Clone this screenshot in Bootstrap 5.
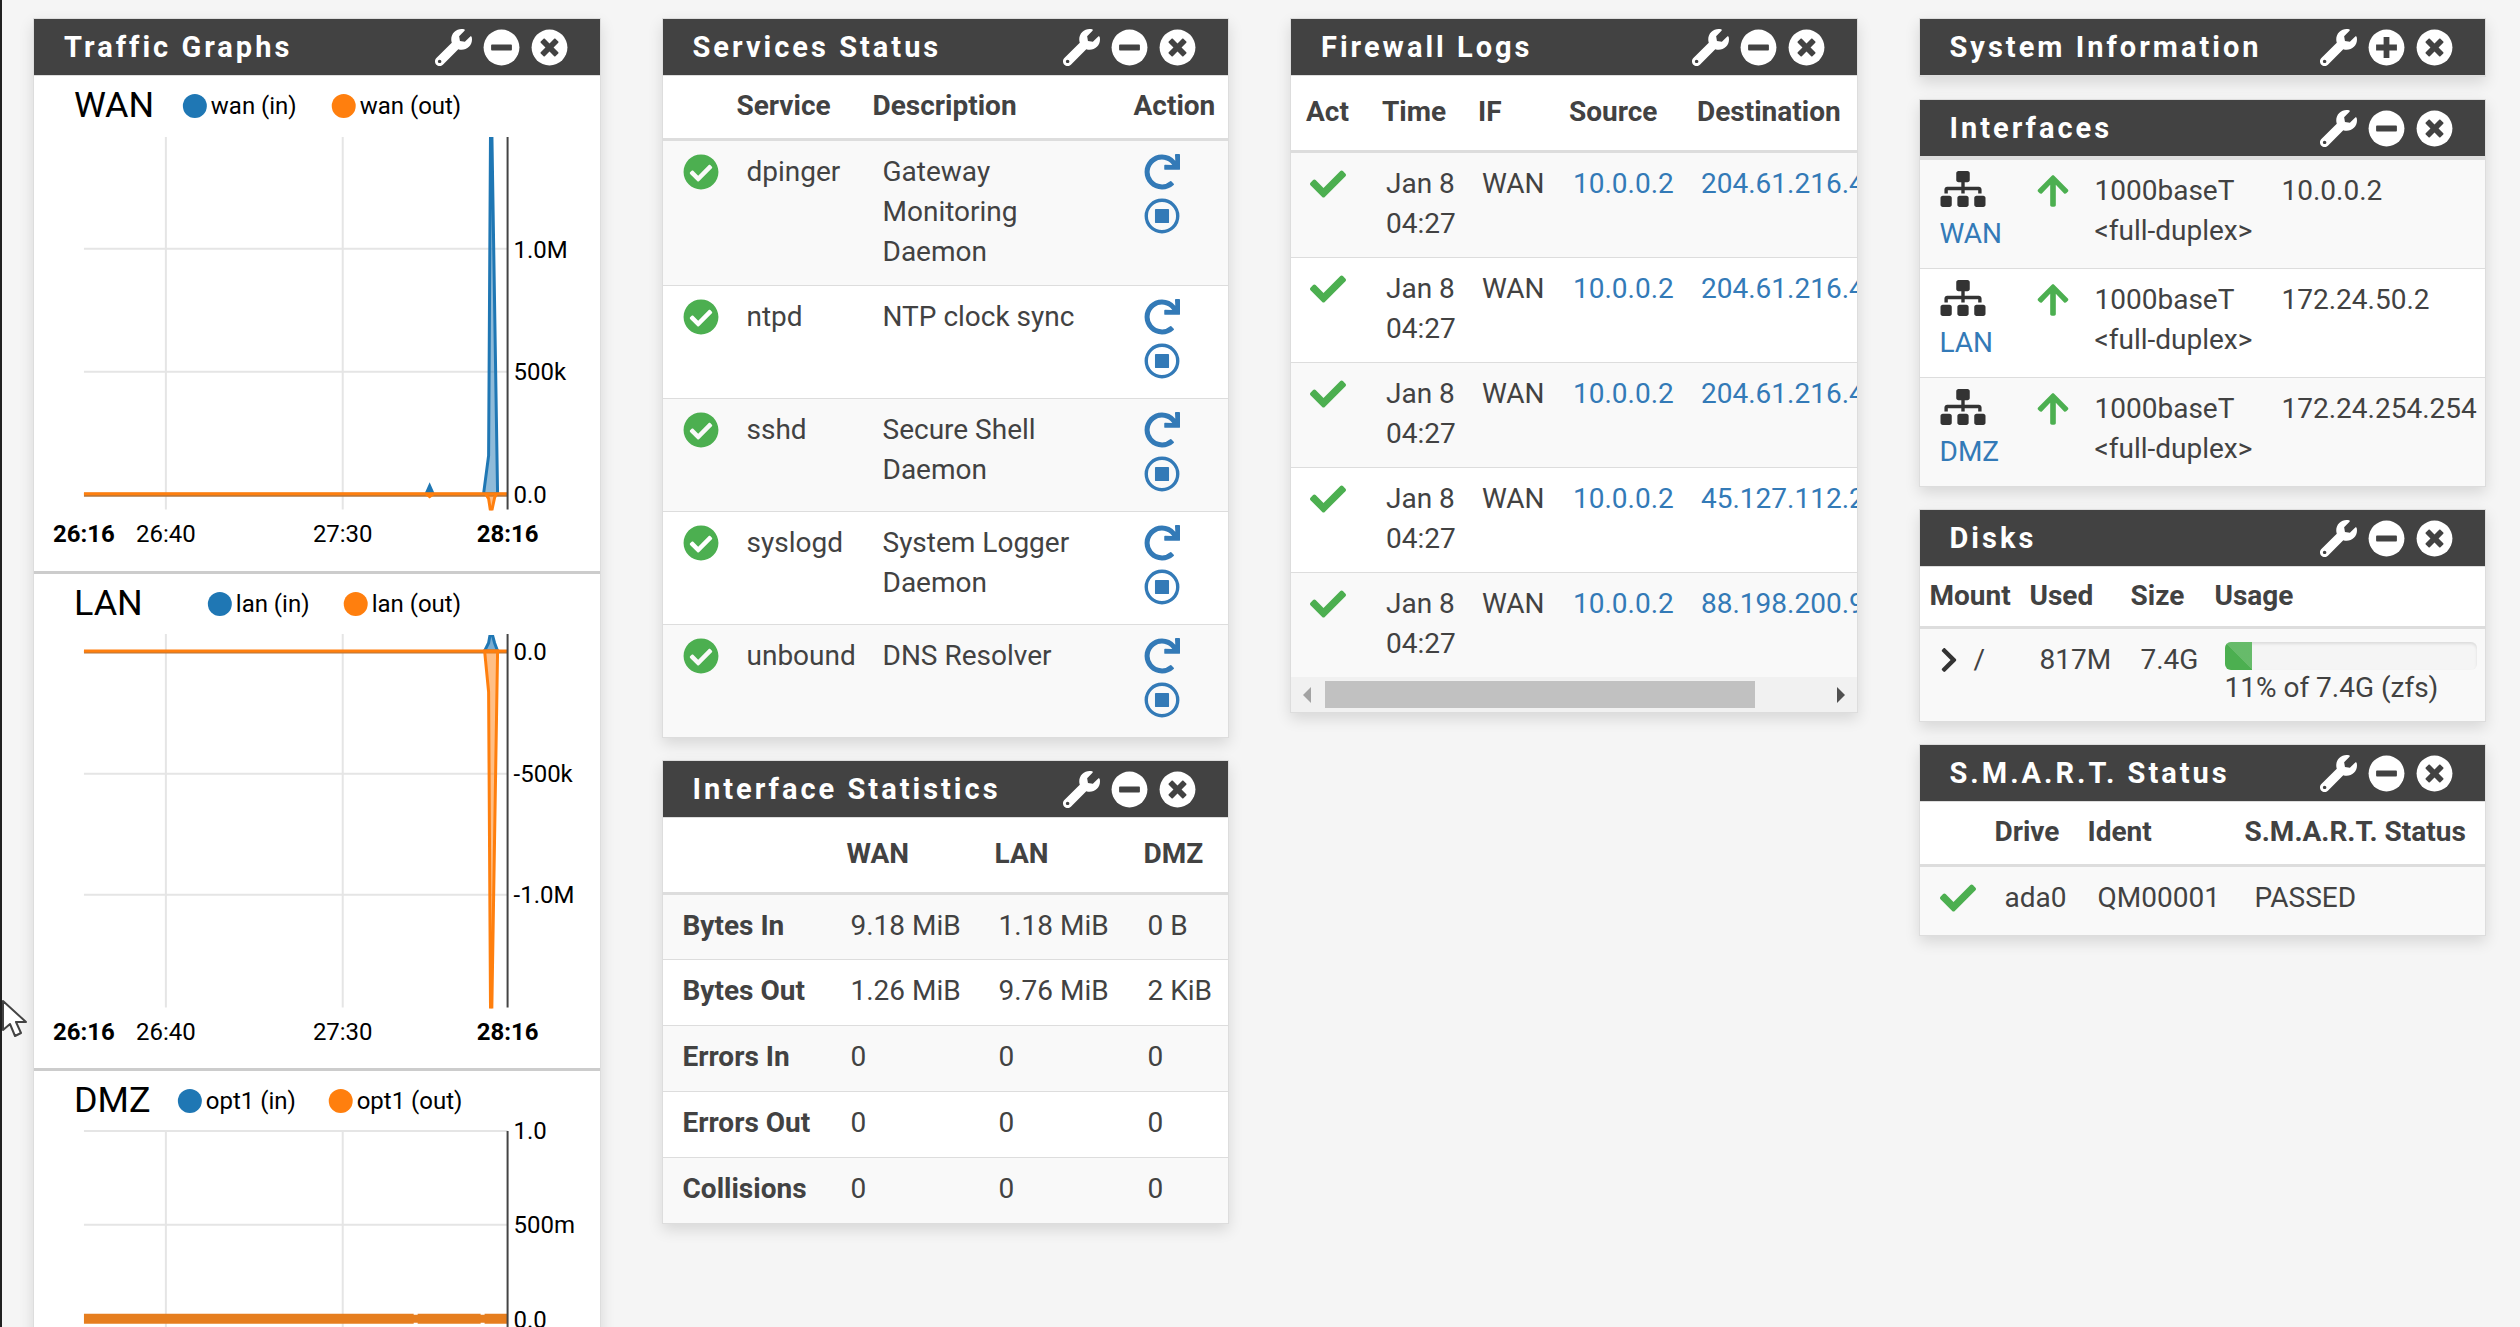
<!DOCTYPE html>
<html lang="en">
<head>
<meta charset="utf-8">
<meta name="viewport" content="width=device-width, initial-scale=1">
<title>Status / Dashboard</title>
<link href="https://cdn.jsdelivr.net/npm/bootstrap@5.3.0/dist/css/bootstrap.min.css" rel="stylesheet">
<style>
  body { font-family: Roboto, sans-serif; font-size: 28px; line-height: 40px; color: #424242; background: #f5f5f5; }
  a { color: #337ab7; text-decoration: none; }
  main { border-left: 2px solid #212121; padding: 18px 34px 0 31px; height: 100vh; overflow: hidden; }
  .board { --bs-gutter-x: 61px; }
  .widget { border: 1px solid #ddd; background: #fff; margin-bottom: 22px; box-shadow: 0 6px 14px rgba(0,0,0,.12); }
  .widget-head { height: 57px; padding: 0 32px 0 30px; background: #424242; border-bottom: 1px solid #ddd; }
  .widget-head h2 { font-size: 29px; line-height: 40px; font-weight: 700; letter-spacing: 3px; color: #fff; }
  .tool { display: flex; padding: 0; border: 0; background: none; color: #fff; }
  .tools { gap: 11px; }
  .tool svg { width: 37px; height: 37px; }
  .glyph { display: block; width: 36px; height: 36px; fill: currentColor; }
  .ok { color: #4caf50; }
  .up { width: 32px; }
  .net { width: 46px; color: #333; margin-bottom: 7px; }
  .chev { width: 18px; height: 28px; color: #333; }
  .icon-line { height: 40px; display: flex; align-items: center; }
  .act-links { display: flex; flex-direction: column; gap: 8px; padding-top: 2px; }

  .grid-tbl { table-layout: fixed; border-collapse: separate; border-spacing: 0; margin: 0; --bs-table-bg: transparent; --bs-table-color: #424242; --bs-table-striped-bg: #f9f9f9; --bs-table-striped-color: #424242; }
  .grid-tbl thead th { padding: 10px 0 12px 10px; border: 0; font-weight: 700; color: #424242; white-space: nowrap; }
  .grid-tbl tbody tr > * { padding: 11px 8px 13px 20px; border: 0; border-top: 1px solid #ddd; }
  .grid-tbl tbody tr:first-child > * { border-top: 3px solid #ddd; }
  .tall-head thead th { padding: 16px 0 18px 12px; }
  .tall-head tbody tr > * { padding-left: 16px; padding-right: 0; }
  .tall-head tbody tr > th { font-weight: 700; color: #424242; height: 66px; padding-left: 20px; }
  .log-tbl { width: 650px; }
  .log-tbl thead th { padding-left: 15px; }
  .log-tbl tbody tr > * { padding-left: 19px; }
  .log-tbl tbody td { white-space: nowrap; }
  .svc-tbl tbody td { height: 113px; }
  .if-tbl tbody td { height: 109px; white-space: nowrap; padding-right: 0; }
  .if-tbl tbody tr:first-child > td { height: 111px; }
  .disk-tbl thead th { padding: 9px 0 10px 10px; }
  .disk-tbl tbody td { height: 95px; }
  .smart-tbl tbody td { height: 71px; padding-right: 0; }
  .usage-track { height: 28px; border-radius: 6px; background: #f5f5f5; box-shadow: inset 0 2px 3px rgba(0,0,0,.1); margin-top: 2px; }
  .usage-track .progress-bar { background-color: #4caf50; background-size: 64px 64px; }
  .usage-text { line-height: 36px; white-space: nowrap; }

  .sbar { height: 35px; background: #f1f1f1; display: flex; align-items: center; padding: 0 12px; gap: 14px; }
  .sbar button { padding: 0; border: 0; background: none; display: flex; }
  .sbar svg { width: 8px; height: 16px; }
  .sbar-track { flex: 1; height: 27px; }
  .sbar-thumb { height: 27px; width: 430px; background: #c1c1c1; }

  .chart { border-bottom: 3px solid #ccc; }
  .chart svg { display: block; width: 100%; }
  .chart text { font-family: Roboto, sans-serif; font-size: 24px; fill: #000; }
  .chart .series-name { font-size: 36px; }
  .chart .mid { text-anchor: middle; }
  .chart .edge { text-anchor: middle; font-weight: 700; }
  .gridline { stroke: #e5e5e5; stroke-width: 2; fill: none; }
  .axis { stroke: #444; stroke-width: 2; }
  .pointer { position: absolute; left: 2px; top: 999px; width: 26px; height: 40px; }
</style>
</head>
<body>
<svg class="d-none" aria-hidden="true">
  <symbol id="i-wrench" viewBox="0 0 512 512"><path d="M507.730 109.100c-2.240-9.030-13.540-12.090-20.120-5.510l-74.360 74.360-67.880-11.310-11.310-67.880 74.360-74.360c6.620-6.620 3.430-17.900-5.660-20.160-47.380-11.740-99.550.91-136.580 37.930-39.640 39.640-50.550 97.100-34.050 147.200L18.740 402.760c-24.990 24.990-24.990 65.510 0 90.500 24.990 24.990 65.510 24.990 90.500 0l213.210-213.210c50.120 16.710 107.470 5.680 147.370-34.220 37.070-37.070 49.700-89.320 37.910-136.730zM64 472c-13.250 0-24-10.750-24-24 0-13.260 10.750-24 24-24s24 10.740 24 24c0 13.250-10.750 24-24 24z" fill="currentColor"/></symbol>
  <symbol id="i-minus" viewBox="0 0 512 512"><circle cx="256" cy="256" r="248" fill="currentColor"/><rect x="112" y="216" width="288" height="80" rx="12" fill="#424242"/></symbol>
  <symbol id="i-plus" viewBox="0 0 512 512"><circle cx="256" cy="256" r="248" fill="currentColor"/><path d="M112 216h104V112h80v104h104v80H296v104h-80V296H112z" fill="#424242"/></symbol>
  <symbol id="i-times" viewBox="0 0 512 512"><circle cx="256" cy="256" r="248" fill="currentColor"/><path fill="#424242" d="M377.6 338c4.700-4.700 4.700-12.300 0-17L312 256l65.600-65c4.700-4.700 4.700-12.300 0-17L338 134.400c-4.700-4.700-12.300-4.700-17 0L256 200l-65-65.600c-4.700-4.700-12.300-4.700-17 0L134.400 174c-4.700 4.700-4.700 12.300 0 17l65.600 65-65.600 65c-4.700 4.700-4.700 12.300 0 17L174 377.600c4.700 4.700 12.300 4.700 17 0L256 312l65 65.600c4.700 4.700 12.300 4.700 17 0z"/></symbol>
  <symbol id="i-okc" viewBox="0 0 512 512"><path d="M504 256c0 136.967-111.033 248-248 248S8 392.967 8 256 119.033 8 256 8s248 111.033 248 248zM227.314 387.314l184-184c6.248-6.248 6.248-16.379 0-22.627l-22.627-22.627c-6.248-6.249-16.379-6.249-22.628 0L216 308.118l-70.059-70.059c-6.248-6.248-16.379-6.248-22.628 0l-22.627 22.627c-6.248 6.248-6.248 16.379 0 22.627l104 104c6.249 6.249 16.379 6.249 22.628.001z"/></symbol>
  <symbol id="i-check" viewBox="0 0 512 512"><path d="M173.898 439.404l-166.400-166.400c-9.997-9.997-9.997-26.206 0-36.204l36.203-36.204c9.997-9.998 26.207-9.998 36.204 0L192 312.690 432.095 72.596c9.997-9.997 26.207-9.997 36.204 0l36.203 36.204c9.997 9.997 9.997 26.206 0 36.204l-294.400 294.401c-9.998 9.997-26.207 9.997-36.204-.001z"/></symbol>
  <symbol id="i-redo" viewBox="0 0 512 512"><path d="M500.33 0h-47.41a12 12 0 0 0-12 12.570l4 82.760A247.420 247.420 0 0 0 256 8C119.340 8 7.900 119.530 8 256.190 8.100 393.070 119.100 504 256 504a247.100 247.100 0 0 0 166.180-63.910 12 12 0 0 0 .48-17.430l-34-34a12 12 0 0 0-16.380-.55A176 176 0 1 1 402.100 157.800l-101.530-4.870a12 12 0 0 0-12.570 12v47.410a12 12 0 0 0 12 12h200.330a12 12 0 0 0 12-12V12a12 12 0 0 0-12-12z"/></symbol>
  <symbol id="i-stop" viewBox="0 0 512 512"><circle cx="256" cy="256" r="224" fill="none" stroke="currentColor" stroke-width="48"/><rect x="156" y="156" width="200" height="200" rx="12"/></symbol>
  <symbol id="i-net" viewBox="0 0 640 512"><path d="M128 352H32c-17.670 0-32 14.330-32 32v96c0 17.670 14.330 32 32 32h96c17.670 0 32-14.330 32-32v-96c0-17.670-14.330-32-32-32zm-24-80h192v48h48v-48h192v48h48v-57.590c0-21.170-17.230-38.410-38.410-38.410H344v-64h40c17.670 0 32-14.330 32-32V32c0-17.670-14.330-32-32-32H256c-17.670 0-32 14.330-32 32v96c0 17.670 14.330 32 32 32h40v64H94.410C73.230 224 56 241.230 56 262.410V320h48v-48zm264 80h-96c-17.670 0-32 14.330-32 32v96c0 17.670 14.330 32 32 32h96c17.670 0 32-14.330 32-32v-96c0-17.670-14.330-32-32-32zm240 0h-96c-17.670 0-32 14.330-32 32v96c0 17.670 14.330 32 32 32h96c17.670 0 32-14.330 32-32v-96c0-17.670-14.330-32-32-32z"/></symbol>
  <symbol id="i-up" viewBox="0 0 448 512"><path d="M34.900 289.500l-22.200-22.200c-9.400-9.400-9.400-24.600 0-33.900L207 39c9.400-9.400 24.600-9.400 33.900 0l194.300 194.300c9.400 9.400 9.400 24.600 0 33.900L413 289.400c-9.500 9.500-25 9.300-34.300-.4L264 168.600V456c0 13.300-10.700 24-24 24h-32c-13.300 0-24-10.700-24-24V168.600L69.200 289.100c-9.300 9.800-24.800 10-34.300.4z"/></symbol>
  <symbol id="i-chev" viewBox="0 0 320 512"><path d="M285.476 272.971L91.132 467.314c-9.373 9.373-24.569 9.373-33.941 0l-22.667-22.667c-9.357-9.357-9.375-24.522-.04-33.901L188.505 256 34.484 101.255c-9.335-9.379-9.317-24.544.04-33.901l22.667-22.667c9.373-9.373 24.569-9.373 33.941 0L285.475 239.030c9.373 9.372 9.373 24.568.001 33.941z"/></symbol>
</svg>

<main>
  <div class="row row-cols-4 board">

    <div class="col">
      <section class="widget">
        <header class="widget-head d-flex align-items-center justify-content-between">
          <h2 class="m-0">Traffic Graphs</h2>
          <div class="tools d-flex">
            <button class="tool" aria-label="Settings"><svg><use href="#i-wrench"/></svg></button>
            <button class="tool" aria-label="Collapse"><svg><use href="#i-minus"/></svg></button>
            <button class="tool" aria-label="Close"><svg><use href="#i-times"/></svg></button>
          </div>
        </header>

        <div class="chart">
          <svg viewBox="0 0 566 495">
            <clipPath id="plot"><rect x="48" y="61" width="430" height="374"/></clipPath>
            <text class="series-name" x="40" y="41">WAN</text>
            <circle cx="161" cy="30" r="12" fill="#1f77b4"/><text x="177" y="38">wan (in)</text>
            <circle cx="310" cy="30" r="12" fill="#ff7f0e"/><text x="326" y="38">wan (out)</text>
            <path class="gridline" d="M132 61V434M309 61V434M50 173H474M50 296H474"/>
            <g clip-path="url(#plot)">
              <path d="M450 418L455 380L457 40H458L464 418Z" fill="#1f77b4" fill-opacity=".5" stroke="#1f77b4" stroke-width="3"/>
              <path d="M392 418L396 409L400 418Z" fill="#1f77b4" stroke="#1f77b4" stroke-width="2"/>
              <path d="M50 419H474" stroke="#b5763c" stroke-width="4"/>
              <path d="M50 418H474" stroke="#ff7f0e" stroke-width="3"/>
              <path d="M392 418L396 421L400 418M452 418L455 423L457 436H458L461 422L463 418" fill="#ff7f0e" fill-opacity=".5" stroke="#ff7f0e" stroke-width="3"/>
            </g>
            <path class="axis" d="M474 61V434"/>
            <text x="480" y="182">1.0M</text><text x="480" y="304">500k</text><text x="480" y="427">0.0</text>
            <text class="edge" x="50" y="466">26:16</text><text class="mid" x="132" y="466">26:40</text><text class="mid" x="309" y="466">27:30</text><text class="edge" x="474" y="466">28:16</text>
          </svg>
        </div>

        <div class="chart">
          <svg viewBox="0 0 566 495">
            <text class="series-name" x="40" y="41">LAN</text>
            <circle cx="186" cy="30" r="12" fill="#1f77b4"/><text x="202" y="38">lan (in)</text>
            <circle cx="322" cy="30" r="12" fill="#ff7f0e"/><text x="338" y="38">lan (out)</text>
            <path class="gridline" d="M132 60V434M309 60V434M50 200H474M50 321H474"/>
            <g clip-path="url(#plot)">
              <path d="M451 77L455 69L457 58H458L461 69L464 77Z" fill="#1f77b4" fill-opacity=".6" stroke="#1f77b4" stroke-width="3"/>
              <path d="M50 78H474" stroke="#b5763c" stroke-width="3"/>
              <path d="M50 77H474" stroke="#ff7f0e" stroke-width="3"/>
              <path d="M451 77L455 118L457 450H458L464 77Z" fill="#ff7f0e" fill-opacity=".5" stroke="#ff7f0e" stroke-width="3"/>
            </g>
            <path class="axis" d="M474 60V434"/>
            <text x="480" y="86">0.0</text><text x="480" y="208">-500k</text><text x="480" y="329">-1.0M</text>
            <text class="edge" x="50" y="466">26:16</text><text class="mid" x="132" y="466">26:40</text><text class="mid" x="309" y="466">27:30</text><text class="edge" x="474" y="466">28:16</text>
          </svg>
        </div>

        <div class="chart">
          <svg viewBox="0 0 566 495">
            <text class="series-name" x="40" y="41">DMZ</text>
            <circle cx="156" cy="30" r="12" fill="#1f77b4"/><text x="172" y="38">opt1 (in)</text>
            <circle cx="307" cy="30" r="12" fill="#ff7f0e"/><text x="323" y="38">opt1 (out)</text>
            <path class="gridline" d="M132 60V434M309 60V434M50 60H474M50 154H474"/>
            <path d="M50 248H474" stroke="#e67e1e" stroke-width="10"/>
            <path d="M380 243H384M380 253H384M447 243H451M447 253H451" stroke="#fff" stroke-width="2"/>
            <path class="axis" d="M474 60V434"/>
            <text x="480" y="68">1.0</text><text x="480" y="162">500m</text><text x="480" y="257">0.0</text>
          </svg>
        </div>
      </section>
    </div>

    <div class="col">
      <section class="widget">
        <header class="widget-head d-flex align-items-center justify-content-between">
          <h2 class="m-0">Services Status</h2>
          <div class="tools d-flex">
            <button class="tool" aria-label="Settings"><svg><use href="#i-wrench"/></svg></button>
            <button class="tool" aria-label="Collapse"><svg><use href="#i-minus"/></svg></button>
            <button class="tool" aria-label="Close"><svg><use href="#i-times"/></svg></button>
          </div>
        </header>
        <table class="table table-striped grid-tbl svc-tbl">
          <colgroup><col width="64"><col width="136"><col width="261"><col></colgroup>
          <thead><tr><th></th><th>Service</th><th>Description</th><th>Action</th></tr></thead>
          <tbody>
            <tr><td><div class="icon-line"><svg class="glyph ok"><use href="#i-okc"/></svg></div></td><td>dpinger</td><td>Gateway Monitoring Daemon</td><td><div class="act-links"><a href="#" aria-label="Restart"><svg class="glyph"><use href="#i-redo"/></svg></a><a href="#" aria-label="Stop"><svg class="glyph"><use href="#i-stop"/></svg></a></div></td></tr>
            <tr><td><div class="icon-line"><svg class="glyph ok"><use href="#i-okc"/></svg></div></td><td>ntpd</td><td>NTP clock sync</td><td><div class="act-links"><a href="#" aria-label="Restart"><svg class="glyph"><use href="#i-redo"/></svg></a><a href="#" aria-label="Stop"><svg class="glyph"><use href="#i-stop"/></svg></a></div></td></tr>
            <tr><td><div class="icon-line"><svg class="glyph ok"><use href="#i-okc"/></svg></div></td><td>sshd</td><td>Secure Shell Daemon</td><td><div class="act-links"><a href="#" aria-label="Restart"><svg class="glyph"><use href="#i-redo"/></svg></a><a href="#" aria-label="Stop"><svg class="glyph"><use href="#i-stop"/></svg></a></div></td></tr>
            <tr><td><div class="icon-line"><svg class="glyph ok"><use href="#i-okc"/></svg></div></td><td>syslogd</td><td>System Logger Daemon</td><td><div class="act-links"><a href="#" aria-label="Restart"><svg class="glyph"><use href="#i-redo"/></svg></a><a href="#" aria-label="Stop"><svg class="glyph"><use href="#i-stop"/></svg></a></div></td></tr>
            <tr><td><div class="icon-line"><svg class="glyph ok"><use href="#i-okc"/></svg></div></td><td>unbound</td><td>DNS Resolver</td><td><div class="act-links"><a href="#" aria-label="Restart"><svg class="glyph"><use href="#i-redo"/></svg></a><a href="#" aria-label="Stop"><svg class="glyph"><use href="#i-stop"/></svg></a></div></td></tr>
          </tbody>
        </table>
      </section>

      <section class="widget">
        <header class="widget-head d-flex align-items-center justify-content-between">
          <h2 class="m-0">Interface Statistics</h2>
          <div class="tools d-flex">
            <button class="tool" aria-label="Settings"><svg><use href="#i-wrench"/></svg></button>
            <button class="tool" aria-label="Collapse"><svg><use href="#i-minus"/></svg></button>
            <button class="tool" aria-label="Close"><svg><use href="#i-times"/></svg></button>
          </div>
        </header>
        <table class="table table-striped grid-tbl tall-head">
          <colgroup><col width="172"><col width="148"><col width="149"><col></colgroup>
          <thead><tr><th></th><th>WAN</th><th>LAN</th><th>DMZ</th></tr></thead>
          <tbody>
            <tr><th scope="row">Bytes In</th><td>9.18 MiB</td><td>1.18 MiB</td><td>0 B</td></tr>
            <tr><th scope="row">Bytes Out</th><td>1.26 MiB</td><td>9.76 MiB</td><td>2 KiB</td></tr>
            <tr><th scope="row">Errors In</th><td>0</td><td>0</td><td>0</td></tr>
            <tr><th scope="row">Errors Out</th><td>0</td><td>0</td><td>0</td></tr>
            <tr><th scope="row">Collisions</th><td>0</td><td>0</td><td>0</td></tr>
          </tbody>
        </table>
      </section>
    </div>

    <div class="col">
      <section class="widget">
        <header class="widget-head d-flex align-items-center justify-content-between">
          <h2 class="m-0">Firewall Logs</h2>
          <div class="tools d-flex">
            <button class="tool" aria-label="Settings"><svg><use href="#i-wrench"/></svg></button>
            <button class="tool" aria-label="Collapse"><svg><use href="#i-minus"/></svg></button>
            <button class="tool" aria-label="Close"><svg><use href="#i-times"/></svg></button>
          </div>
        </header>
        <div class="overflow-hidden">
          <table class="table table-striped grid-tbl tall-head log-tbl">
            <colgroup><col width="76"><col width="96"><col width="91"><col width="128"><col></colgroup>
            <thead><tr><th>Act</th><th>Time</th><th>IF</th><th>Source</th><th>Destination</th></tr></thead>
            <tbody>
              <tr><td><div class="icon-line"><svg class="glyph ok"><use href="#i-check"/></svg></div></td><td>Jan 8<br>04:27</td><td>WAN</td><td><a href="#">10.0.0.2</a></td><td><a href="#">204.61.216.4</a></td></tr>
              <tr><td><div class="icon-line"><svg class="glyph ok"><use href="#i-check"/></svg></div></td><td>Jan 8<br>04:27</td><td>WAN</td><td><a href="#">10.0.0.2</a></td><td><a href="#">204.61.216.4</a></td></tr>
              <tr><td><div class="icon-line"><svg class="glyph ok"><use href="#i-check"/></svg></div></td><td>Jan 8<br>04:27</td><td>WAN</td><td><a href="#">10.0.0.2</a></td><td><a href="#">204.61.216.4</a></td></tr>
              <tr><td><div class="icon-line"><svg class="glyph ok"><use href="#i-check"/></svg></div></td><td>Jan 8<br>04:27</td><td>WAN</td><td><a href="#">10.0.0.2</a></td><td><a href="#">45.127.112.2</a></td></tr>
              <tr><td><div class="icon-line"><svg class="glyph ok"><use href="#i-check"/></svg></div></td><td>Jan 8<br>04:27</td><td>WAN</td><td><a href="#">10.0.0.2</a></td><td><a href="#">88.198.200.9</a></td></tr>
            </tbody>
          </table>
        </div>
        <div class="sbar">
          <button aria-label="Scroll left"><svg viewBox="0 0 8 16"><path d="M8 0V16L0 8Z" fill="#a3a3a3"/></svg></button>
          <div class="sbar-track"><div class="sbar-thumb"></div></div>
          <button aria-label="Scroll right"><svg viewBox="0 0 8 16"><path d="M0 0V16L8 8Z" fill="#505050"/></svg></button>
        </div>
      </section>
    </div>

    <div class="col">
      <section class="widget">
        <header class="widget-head d-flex align-items-center justify-content-between">
          <h2 class="m-0">System Information</h2>
          <div class="tools d-flex">
            <button class="tool" aria-label="Settings"><svg><use href="#i-wrench"/></svg></button>
            <button class="tool" aria-label="Expand"><svg><use href="#i-plus"/></svg></button>
            <button class="tool" aria-label="Close"><svg><use href="#i-times"/></svg></button>
          </div>
        </header>
      </section>

      <section class="widget">
        <header class="widget-head d-flex align-items-center justify-content-between">
          <h2 class="m-0">Interfaces</h2>
          <div class="tools d-flex">
            <button class="tool" aria-label="Settings"><svg><use href="#i-wrench"/></svg></button>
            <button class="tool" aria-label="Collapse"><svg><use href="#i-minus"/></svg></button>
            <button class="tool" aria-label="Close"><svg><use href="#i-times"/></svg></button>
          </div>
        </header>
        <table class="table table-striped grid-tbl if-tbl">
          <colgroup><col width="97"><col width="58"><col width="187"><col></colgroup>
          <tbody>
            <tr><td><svg class="glyph net"><use href="#i-net"/></svg><a href="#">WAN</a></td><td><div class="icon-line"><svg class="glyph up ok"><use href="#i-up"/></svg></div></td><td>1000baseT<br>&lt;full-duplex&gt;</td><td>10.0.0.2</td></tr>
            <tr><td><svg class="glyph net"><use href="#i-net"/></svg><a href="#">LAN</a></td><td><div class="icon-line"><svg class="glyph up ok"><use href="#i-up"/></svg></div></td><td>1000baseT<br>&lt;full-duplex&gt;</td><td>172.24.50.2</td></tr>
            <tr><td><svg class="glyph net"><use href="#i-net"/></svg><a href="#">DMZ</a></td><td><div class="icon-line"><svg class="glyph up ok"><use href="#i-up"/></svg></div></td><td>1000baseT<br>&lt;full-duplex&gt;</td><td>172.24.254.254</td></tr>
          </tbody>
        </table>
      </section>

      <section class="widget">
        <header class="widget-head d-flex align-items-center justify-content-between">
          <h2 class="m-0">Disks</h2>
          <div class="tools d-flex">
            <button class="tool" aria-label="Settings"><svg><use href="#i-wrench"/></svg></button>
            <button class="tool" aria-label="Collapse"><svg><use href="#i-minus"/></svg></button>
            <button class="tool" aria-label="Close"><svg><use href="#i-times"/></svg></button>
          </div>
        </header>
        <table class="table table-striped grid-tbl disk-tbl">
          <colgroup><col width="100"><col width="101"><col width="84"><col></colgroup>
          <thead><tr><th>Mount</th><th>Used</th><th>Size</th><th>Usage</th></tr></thead>
          <tbody>
            <tr>
              <td><div class="icon-line"><svg class="glyph chev"><use href="#i-chev"/></svg><span class="ms-3">/</span></div></td>
              <td class="pe-0">817M</td><td class="pe-0">7.4G</td>
              <td><div class="progress usage-track"><div class="progress-bar progress-bar-striped" role="progressbar" aria-label="Disk usage" aria-valuenow="11" aria-valuemin="0" aria-valuemax="100" style="width: 11%"></div></div><div class="usage-text">11% of 7.4G (zfs)</div></td>
            </tr>
          </tbody>
        </table>
      </section>

      <section class="widget">
        <header class="widget-head d-flex align-items-center justify-content-between">
          <h2 class="m-0">S.M.A.R.T. Status</h2>
          <div class="tools d-flex">
            <button class="tool" aria-label="Settings"><svg><use href="#i-wrench"/></svg></button>
            <button class="tool" aria-label="Collapse"><svg><use href="#i-minus"/></svg></button>
            <button class="tool" aria-label="Close"><svg><use href="#i-times"/></svg></button>
          </div>
        </header>
        <table class="table table-striped grid-tbl smart-tbl">
          <colgroup><col width="65"><col width="93"><col width="157"><col></colgroup>
          <thead><tr><th></th><th>Drive</th><th>Ident</th><th>S.M.A.R.T. Status</th></tr></thead>
          <tbody>
            <tr><td><div class="icon-line"><svg class="glyph ok"><use href="#i-check"/></svg></div></td><td>ada0</td><td>QM00001</td><td>PASSED</td></tr>
          </tbody>
        </table>
      </section>
    </div>
  </div>
</main>

<svg class="pointer" viewBox="0 0 26 40" aria-hidden="true"><path d="M1 2V31L8 25L13 37L19 34L14 23H24Z" fill="#fff" stroke="#444" stroke-width="2" stroke-linejoin="round"/></svg>
<script src="https://cdn.jsdelivr.net/npm/bootstrap@5.3.0/dist/js/bootstrap.bundle.min.js"></script>
</body>
</html>
